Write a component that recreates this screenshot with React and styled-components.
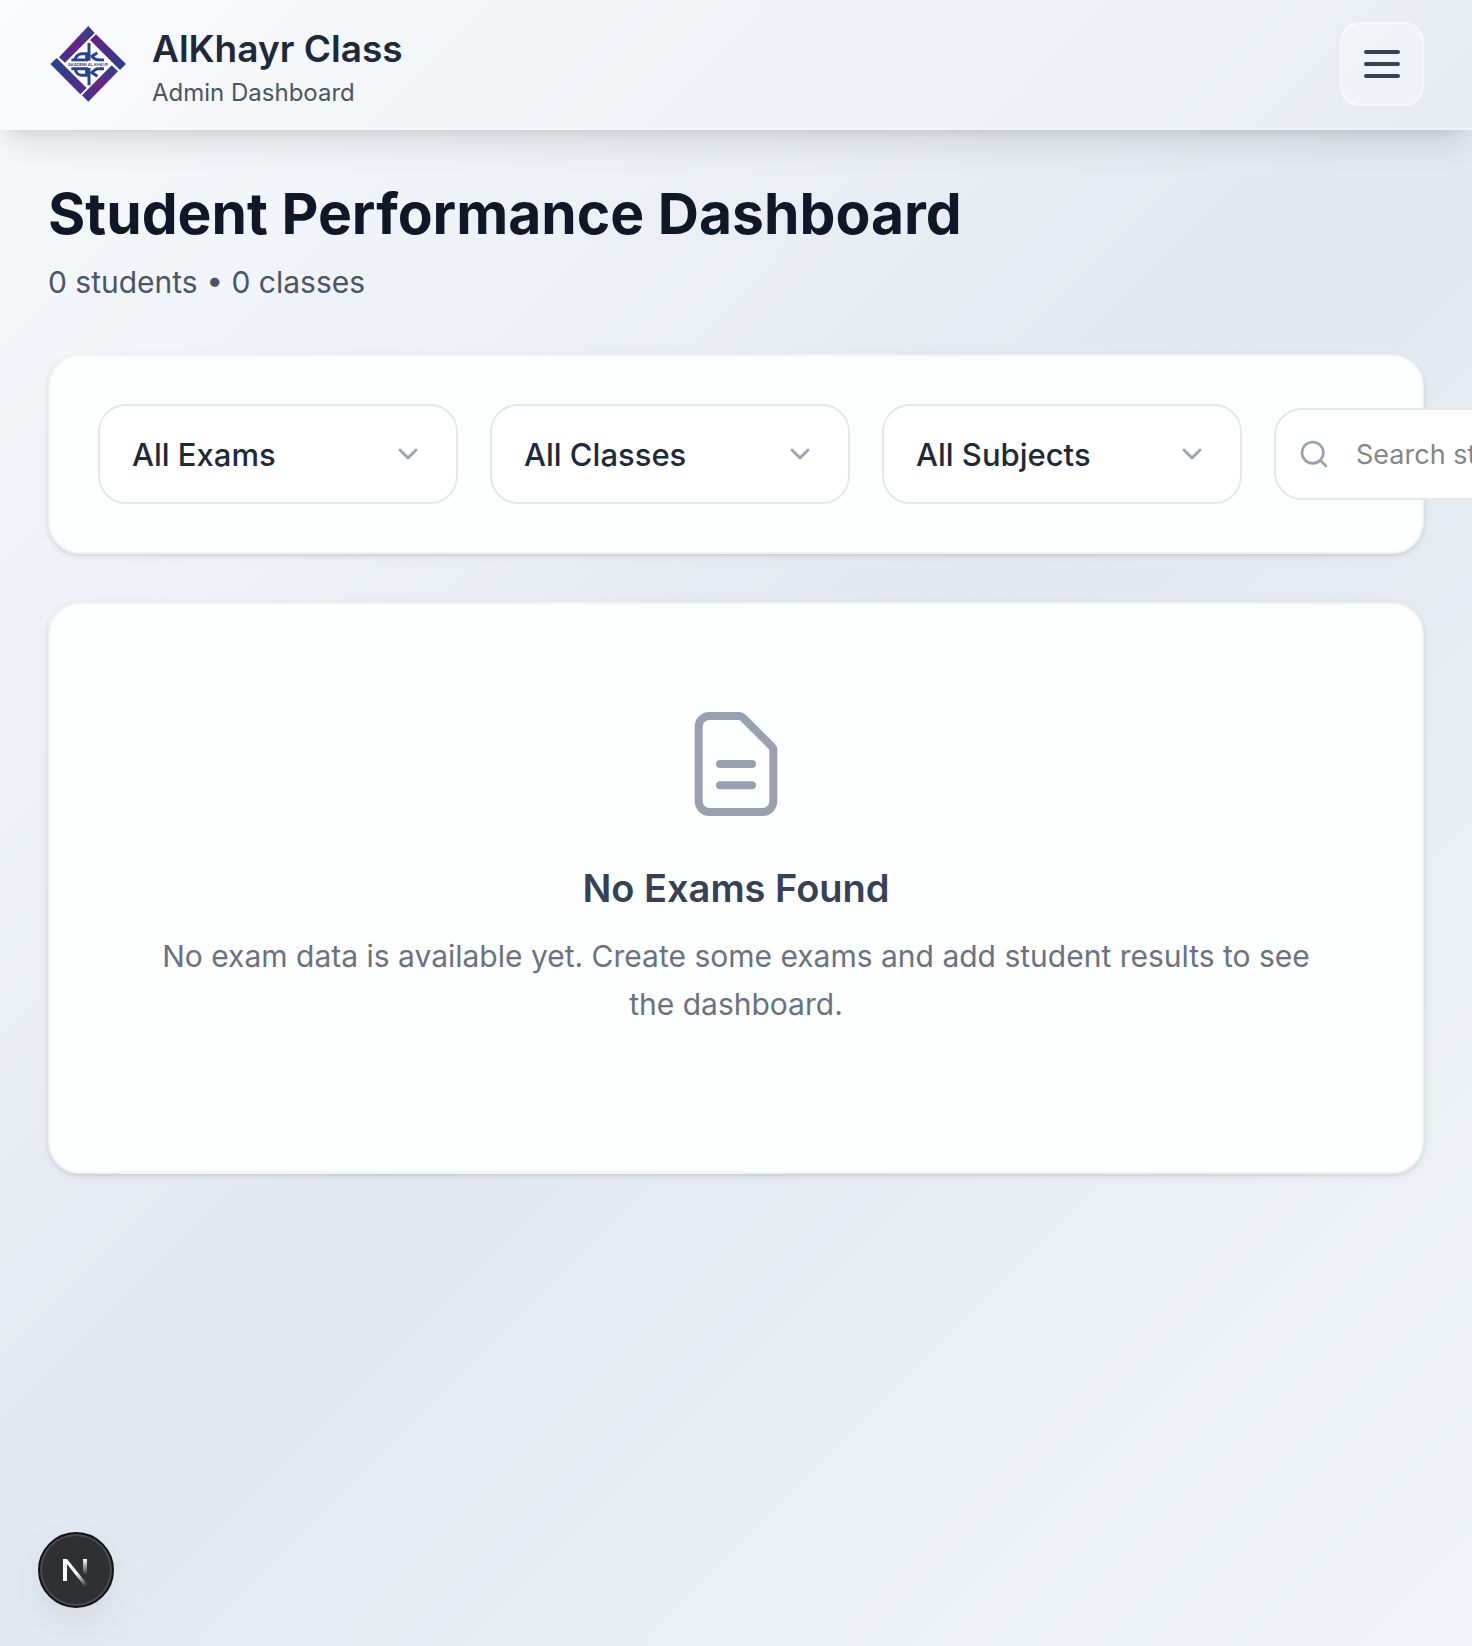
import React from "react";
import styled, { createGlobalStyle } from "styled-components";
import { ChevronDown, Search } from "lucide-react";

const GlobalStyle = createGlobalStyle`
  *, *::before, *::after { box-sizing: border-box; }
  html, body { margin: 0; }
  body {
    font-family: Inter, "Liberation Sans", sans-serif;
    overflow-x: hidden;
    -webkit-font-smoothing: antialiased;
  }
  h1, h2, p { margin: 0; }
`;

const Page = styled.div`
  min-height: 100vh;
  overflow-x: hidden;
  background: linear-gradient(135deg, #f8fafc 0%, #e2e8f0 50%, #f1f5f9 100%);
`;

const Header = styled.header`
  position: relative;
  display: flex;
  align-items: center;
  justify-content: space-between;
  padding: 22px 48px;
  background: rgba(255, 255, 255, 0.2);
  border-bottom: 2px solid rgba(255, 255, 255, 0.3);
  box-shadow: 0 20px 30px -6px rgba(0, 0, 0, 0.1), 0 8px 12px -8px rgba(0, 0, 0, 0.1);
`;

const Brand = styled.div`
  display: flex;
  align-items: center;
  gap: 24px;
`;

const BrandText = styled.div`
  display: flex;
  flex-direction: column;
  gap: 6px;
`;

const BrandName = styled.div`
  font-size: 37px;
  line-height: 52px;
  font-weight: 600;
  color: #1e2939;
`;

const BrandRole = styled.div`
  font-size: 24px;
  line-height: 24px;
  color: #4a5565;
`;

const MenuButton = styled.button`
  display: grid;
  place-items: center;
  width: 84px;
  height: 84px;
  padding: 0;
  border: 2px solid rgba(255, 255, 255, 0.4);
  border-radius: 20px;
  background: rgba(255, 255, 255, 0.36);
  color: #364153;
  cursor: pointer;
`;

const Main = styled.main`
  display: flex;
  flex-direction: column;
  gap: 48px;
  padding: 48px;
`;

const Heading = styled.div`
  display: flex;
  flex-direction: column;
  gap: 8px;
`;

const Title = styled.h1`
  font-size: 57px;
  line-height: 72px;
  font-weight: 700;
  color: #101828;
`;

const Subtitle = styled.p`
  font-size: 30px;
  line-height: 48px;
  color: #4a5565;
`;

const Card = styled.section`
  border: 2px solid #f1f2f6;
  border-radius: 32px;
  background: #fdfefe;
  box-shadow: 0 2px 6px rgba(0, 0, 0, 0.1), 0 2px 4px -2px rgba(0, 0, 0, 0.1);
`;

const Filters = styled(Card)`
  display: flex;
  align-items: center;
  gap: 32px;
  padding: 48px;
`;

const SelectBox = styled.label`
  position: relative;
  flex: none;
  width: 360px;
  svg {
    position: absolute;
    top: 34px;
    right: 34px;
    color: #99a1af;
    pointer-events: none;
  }
`;

const Select = styled.select`
  appearance: none;
  display: block;
  width: 100%;
  height: 100px;
  padding: 0 80px 0 32px;
  border: 2px solid #e5e7eb;
  border-radius: 28px;
  background: #fff;
  font: 500 31px Inter, "Liberation Sans", sans-serif;
  color: #1e2939;
`;

const SearchBox = styled.label`
  position: relative;
  flex: none;
  width: 512px;
  svg {
    position: absolute;
    top: 30px;
    left: 24px;
    color: #99a1af;
  }
`;

const SearchInput = styled.input`
  display: block;
  width: 100%;
  height: 92px;
  padding: 0 32px 0 80px;
  border: 2px solid #e5e7eb;
  border-radius: 28px;
  background: #fff;
  font: 400 27px Inter, "Liberation Sans", sans-serif;
  color: #1e2939;
  &::placeholder { color: #858585; opacity: 1; }
`;

const EmptyState = styled(Card)`
  display: flex;
  flex-direction: column;
  align-items: center;
  padding: 96px 96px 144px;
  text-align: center;
`;

const EmptyTitle = styled.h2`
  margin: 32px 0 16px;
  font-size: 38px;
  line-height: 56px;
  font-weight: 600;
  color: #364153;
`;

const EmptyText = styled.p`
  font-size: 30px;
  line-height: 48px;
  color: #6a7282;
`;

const DevBadge = styled.button`
  position: fixed;
  left: 38px;
  bottom: 38px;
  width: 76px;
  height: 76px;
  padding: 0;
  border: 2px solid #141414;
  border-radius: 50%;
  background: #2e3033;
  box-shadow: inset 0 0 0 2px #4a4b4d, 0 16px 48px -8px rgba(0, 0, 0, 0.1);
  cursor: pointer;
  svg { display: block; }
`;

const Logo = () => (
  <svg width="80" height="80" viewBox="0 0 240 240" role="img" aria-label="Akademi Al Khayr">
    <defs>
      <linearGradient id="rise" x1="0" y1="1" x2="1" y2="0">
        <stop offset="0" stopColor="#2f3b8c" />
        <stop offset="0.45" stopColor="#6b2483" />
        <stop offset="1" stopColor="#2b4388" />
      </linearGradient>
      <linearGradient id="fall" x1="0" y1="0" x2="1" y2="1">
        <stop offset="0" stopColor="#6b2483" />
        <stop offset="0.5" stopColor="#4a2c86" />
        <stop offset="1" stopColor="#24478a" />
      </linearGradient>
      <linearGradient id="fallBack" x1="0" y1="0" x2="1" y2="1">
        <stop offset="0" stopColor="#24478a" />
        <stop offset="1" stopColor="#57298a" />
      </linearGradient>
    </defs>
    <path d="M120 26 L214 120 L120 214 L26 120 Z" fill="#fff" />
    <path d="M33 100 L121 6 L140 27 L51 116 Z" fill="url(#rise)" />
    <path d="M144 31 L234 120 L216 138 L126 48 Z" fill="url(#fall)" />
    <path d="M26 102 L116 192 L97 211 L7 120 Z" fill="url(#fallBack)" />
    <path d="M191 124 L210 142 L121 233 L102 214 Z" fill="url(#rise)" />
    <g fill="none" stroke="#28458c" strokeWidth="9">
      <path d="M123 57 V110 M70 108 H116 V89 H100 Q84 92 82 106" />
      <path d="M128 99 L148 86 M132 95 Q138 108 154 108 H168" />
      <path d="M123 132 V184 M70 134 H116 V154 H100 Q84 151 82 136" />
      <path d="M128 143 L148 157 M132 148 Q138 134 154 134 H168" />
    </g>
    <rect x="54" y="113" width="132" height="16" fill="#fff" />
    <text x="120" y="125" textAnchor="middle" fontFamily="Inter, sans-serif" fontSize="12" fontWeight="600" fill="#3b2f6e">
      AKADEMI AL KHAYR
    </text>
  </svg>
);

const MenuIcon = () => (
  <svg width="48" height="48" viewBox="0 0 24 24" fill="none" stroke="currentColor" strokeWidth="2" strokeLinecap="round" aria-hidden="true">
    <path d="M4 6h16M4 12h16M4 18h16" />
  </svg>
);

const DocumentIcon = () => (
  <svg width="128" height="128" viewBox="0 0 24 24" fill="none" stroke="#99a1af" strokeWidth="1.5" strokeLinecap="round" strokeLinejoin="round" aria-hidden="true">
    <path d="M9 12h6m-6 4h6m2 5H7a2 2 0 01-2-2V5a2 2 0 012-2h5.586a1 1 0 01.707.293l5.414 5.414a1 1 0 01.293.707V19a2 2 0 01-2 2z" />
  </svg>
);

const NextMark = () => (
  <svg width="72" height="72" viewBox="0 0 72 72" fill="none" aria-hidden="true">
    <defs>
      <linearGradient id="slant" gradientUnits="userSpaceOnUse" x1="38" y1="38" x2="48" y2="51">
        <stop stopColor="#fff" />
        <stop offset="1" stopColor="#fff" stopOpacity="0" />
      </linearGradient>
      <linearGradient id="stem" gradientUnits="userSpaceOnUse" x1="45" y1="25" x2="45" y2="41">
        <stop stopColor="#fff" />
        <stop offset="1" stopColor="#fff" stopOpacity="0" />
      </linearGradient>
    </defs>
    <path d="M23 25 H27 L48 51 L45 53 L27 30 V47 H23 Z" fill="url(#slant)" />
    <path d="M45 25 V41" stroke="url(#stem)" strokeWidth="4" />
  </svg>
);

const filters = [
  { name: "exam", label: "All Exams" },
  { name: "class", label: "All Classes" },
  { name: "subject", label: "All Subjects" },
];

export default function App() {
  return (
    <Page>
      <GlobalStyle />
      <Header>
        <Brand>
          <Logo />
          <BrandText>
            <BrandName>AlKhayr Class</BrandName>
            <BrandRole>Admin Dashboard</BrandRole>
          </BrandText>
        </Brand>
        <MenuButton type="button" aria-label="Open menu">
          <MenuIcon />
        </MenuButton>
      </Header>
      <Main>
        <Heading>
          <Title>Student Performance Dashboard</Title>
          <Subtitle>0 students • 0 classes</Subtitle>
        </Heading>
        <Filters aria-label="Filters">
          {filters.map(({ name, label }) => (
            <SelectBox key={name}>
              <Select name={name} aria-label={label} defaultValue="all">
                <option value="all">{label}</option>
              </Select>
              <ChevronDown size={32} aria-hidden="true" />
            </SelectBox>
          ))}
          <SearchBox>
            <SearchInput type="search" aria-label="Search students" placeholder="Search students..." />
            <Search size={32} aria-hidden="true" />
          </SearchBox>
        </Filters>
        <EmptyState>
          <DocumentIcon />
          <EmptyTitle>No Exams Found</EmptyTitle>
          <EmptyText>
            No exam data is available yet. Create some exams and add student results to see the dashboard.
          </EmptyText>
        </EmptyState>
      </Main>
      <DevBadge type="button" aria-label="Open developer tools">
        <NextMark />
      </DevBadge>
    </Page>
  );
}
